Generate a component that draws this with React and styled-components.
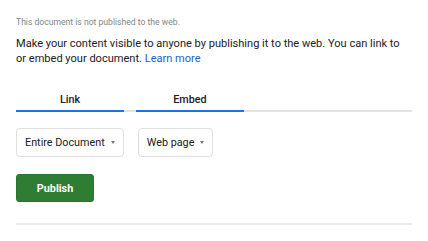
import React from "react";
import styled, { createGlobalStyle } from "styled-components";

const Global = createGlobalStyle`
  html, body { margin: 0; padding: 0; background: #fff; }
  body { font-family: Roboto, "Liberation Sans", Arial, sans-serif; color: #202124; }
`;

const Panel = styled.div`
  width: 396px;
  padding: 17px 0 0 16px;
  display: flex;
  flex-direction: column;
`;

const Status = styled.div`
  font-size: 8.6px;
  line-height: 11px;
  color: #80868b;
`;

const Intro = styled.p`
  margin: 8px 0 0;
  max-width: 390px;
  font-size: 11.05px;
  line-height: 15px;
  color: #202124;
`;

const LearnMore = styled.a`
  color: #1a5fd0;
  text-decoration: none;
`;

const Tabs = styled.div`
  margin-top: 22px;
  display: flex;
  gap: 12px;
  border-bottom: 2px solid #e3e3e3;
`;

const Tab = styled.div`
  width: 108px;
  height: 22px;
  display: flex;
  align-items: center;
  justify-content: center;
  font-size: 10.8px;
  font-weight: 500;
  color: #202124;
  margin-bottom: -2px;
  border-bottom: 2px solid ${(p) => (p.$active ? "#1a73e8" : "transparent")};
`;

const Controls = styled.div`
  margin-top: 16px;
  display: flex;
  gap: 14px;
`;

const Select = styled.div`
  box-sizing: border-box;
  height: 29px;
  padding: 0 8px;
  display: flex;
  align-items: center;
  gap: 6px;
  border: 1px solid #e0e0e0;
  border-radius: 4px;
  font-size: 10.8px;
  color: #202124;
`;

const Caret = styled.span`
  width: 0;
  height: 0;
  border-left: 2.5px solid transparent;
  border-right: 2.5px solid transparent;
  border-top: 3px solid #777;
`;

const PublishButton = styled.button`
  margin-top: 17px;
  align-self: flex-start;
  width: 78px;
  height: 28px;
  background: #2e7d32;
  color: #fff;
  border: 1px solid #2a7530;
  border-radius: 3px;
  font-family: inherit;
  font-size: 10.8px;
  font-weight: 700;
  padding: 0;
`;

const Divider = styled.div`
  margin-top: 21px;
  height: 1.5px;
  background: #ececec;
`;

export default function App() {
  return (
    <>
      <Global />
      <Panel>
        <Status>This document is not published to the web.</Status>
        <Intro>
          Make your content visible to anyone by publishing it to the web. You can link to
          or embed your document. <LearnMore href="#">Learn more</LearnMore>
        </Intro>
        <Tabs>
          <Tab $active>Link</Tab>
          <Tab $active>Embed</Tab>
        </Tabs>
        <Controls>
          <Select>
            Entire Document <Caret />
          </Select>
          <Select>
            Web page <Caret />
          </Select>
        </Controls>
        <PublishButton>Publish</PublishButton>
        <Divider />
      </Panel>
    </>
  );
}
